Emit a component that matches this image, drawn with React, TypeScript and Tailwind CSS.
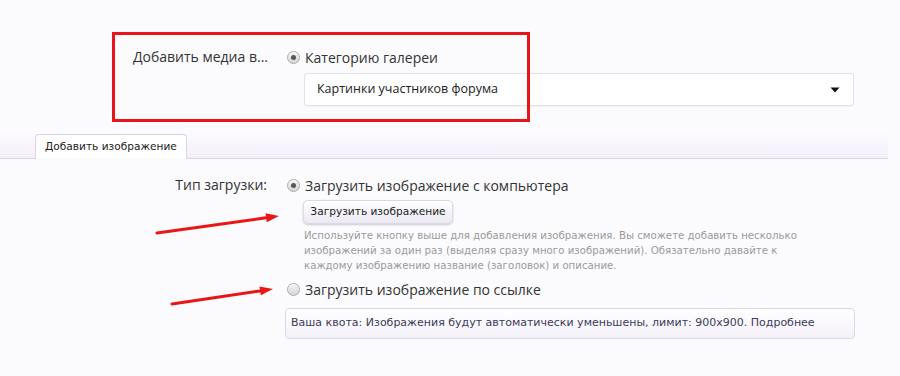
import React from "react";

const SANS = "font-['Open_Sans','Noto_Sans',sans-serif]";
const SMALL = "font-['DejaVu_Sans','Liberation_Sans',sans-serif]";

function Radio({ checked }: { checked?: boolean }) {
  return (
    <span className="flex h-[13px] w-[13px] shrink-0 items-center justify-center rounded-full border border-[#a9a9a9] bg-gradient-to-b from-[#f4f4f4] to-[#d6d6d6] shadow-[inset_0_1px_0_#fff]">
      {checked && <span className="h-[5px] w-[5px] rounded-full bg-[#555]" />}
    </span>
  );
}

function Arrow({ x1, y1, x2, y2 }: { x1: number; y1: number; x2: number; y2: number }) {
  const a = Math.atan2(y2 - y1, x2 - x1);
  const len = 13;
  const w = 4.5;
  const bx = x2 - len * Math.cos(a);
  const by = y2 - len * Math.sin(a);
  const p1 = `${bx + w * Math.sin(a)},${by - w * Math.cos(a)}`;
  const p2 = `${bx - w * Math.sin(a)},${by + w * Math.cos(a)}`;
  return (
    <g>
      <line x1={x1} y1={y1} x2={bx} y2={by} stroke="#ea1515" strokeWidth={3} strokeLinecap="round" />
      <polygon points={`${x2},${y2} ${p1} ${p2}`} fill="#ea1515" />
    </g>
  );
}

export default function App() {
  return (
    <div className={`relative h-[376px] w-[900px] overflow-hidden bg-[#fbfbfd] text-[#333] ${SANS}`}>
      {/* media target */}
      <div className="grid grid-cols-[285px_570px] pt-[47px]">
        <div className="pr-[17px] text-right text-[14px] leading-[20px]">Добавить медиа в...</div>
        <div>
          <label className="flex h-[20px] items-center gap-[5px] pl-[2px] text-[14px]">
            <Radio checked />
            Категорию галереи
          </label>
          <div className="ml-[19px] mt-[6px] flex h-[33px] w-[550px] items-center justify-between rounded-[3px] border border-[#e2e2e8] bg-white pl-[12px] pr-[13px] shadow-[0_1px_1px_rgba(0,0,0,0.03)]">
            <span className="text-[12.5px] text-[#222]">Картинки участников форума</span>
            <svg width="10" height="6" viewBox="0 0 10 6">
              <path d="M0.5 0.5 H9.5 L5 5.5 Z" fill="#111" />
            </svg>
          </div>
        </div>
      </div>

      {/* tabs */}
      <div className="mt-[22px] flex h-[31px] w-[888px] items-end border-b border-[#dcd3e6] bg-gradient-to-b from-[#fdfcff] to-[#f3effa] pl-[35px]">
        <div className={`-mb-px flex h-[25px] w-[152px] items-center rounded-t-[4px] border border-b-0 border-[#ddd3e8] bg-white pl-[9px] text-[10.6px] text-[#222] ${SMALL}`}>
          Добавить изображение
        </div>
      </div>

      {/* upload type */}
      <div className="grid grid-cols-[285px_570px] pt-[16px]">
        <div className="pr-[18px] text-right text-[14px] leading-[20px]">Тип загрузки:</div>
        <div>
          <label className="flex h-[20px] items-center gap-[5px] pl-[2px] text-[14px]">
            <Radio checked />
            Загрузить изображение с компьютера
          </label>
          <button
            className={`ml-[18px] mt-[5px] flex h-[24px] w-[150px] items-center justify-center rounded-[5px] border border-[#dcd8e4] bg-gradient-to-b from-white to-[#ebe8f2] text-[10.6px] text-[#222] shadow-[0_1px_2px_rgba(60,50,90,0.25)] ${SMALL}`}
          >
            Загрузить изображение
          </button>
          <p className={`ml-[19px] mt-[4px] w-[520px] text-[10.2px] leading-[15px] text-[#9a9a9a] ${SMALL}`}>
            Используйте кнопку выше для добавления изображения. Вы сможете добавить несколько изображений за
            один раз (выделяя сразу много изображений). Обязательно давайте к каждому изображению название
            (заголовок) и описание.
          </p>
          <label className="mt-[6px] flex h-[20px] items-center gap-[5px] pl-[2px] text-[14px]">
            <Radio />
            Загрузить изображение по ссылке
          </label>
          <div
            className={`mt-[9px] flex h-[31px] w-[570px] items-center rounded-[4px] border border-[#dcd6e6] bg-gradient-to-b from-white to-[#f4f1fa] pl-[5px] text-[11px] text-[#3c3a58] ${SMALL}`}
          >
            Ваша квота: Изображения будут автоматически уменьшены, лимит: 900x900. Подробнее
          </div>
        </div>
      </div>

      {/* annotations */}
      <div className="pointer-events-none absolute left-[112px] top-[32px] h-[90px] w-[418px] border-[3px] border-[#e8141b]" />
      <svg className="pointer-events-none absolute left-0 top-0" width="900" height="376">
        <Arrow x1={157} y1={233} x2={279} y2={216} />
        <Arrow x1={172} y1={304} x2={273} y2={289} />
      </svg>
    </div>
  );
}
